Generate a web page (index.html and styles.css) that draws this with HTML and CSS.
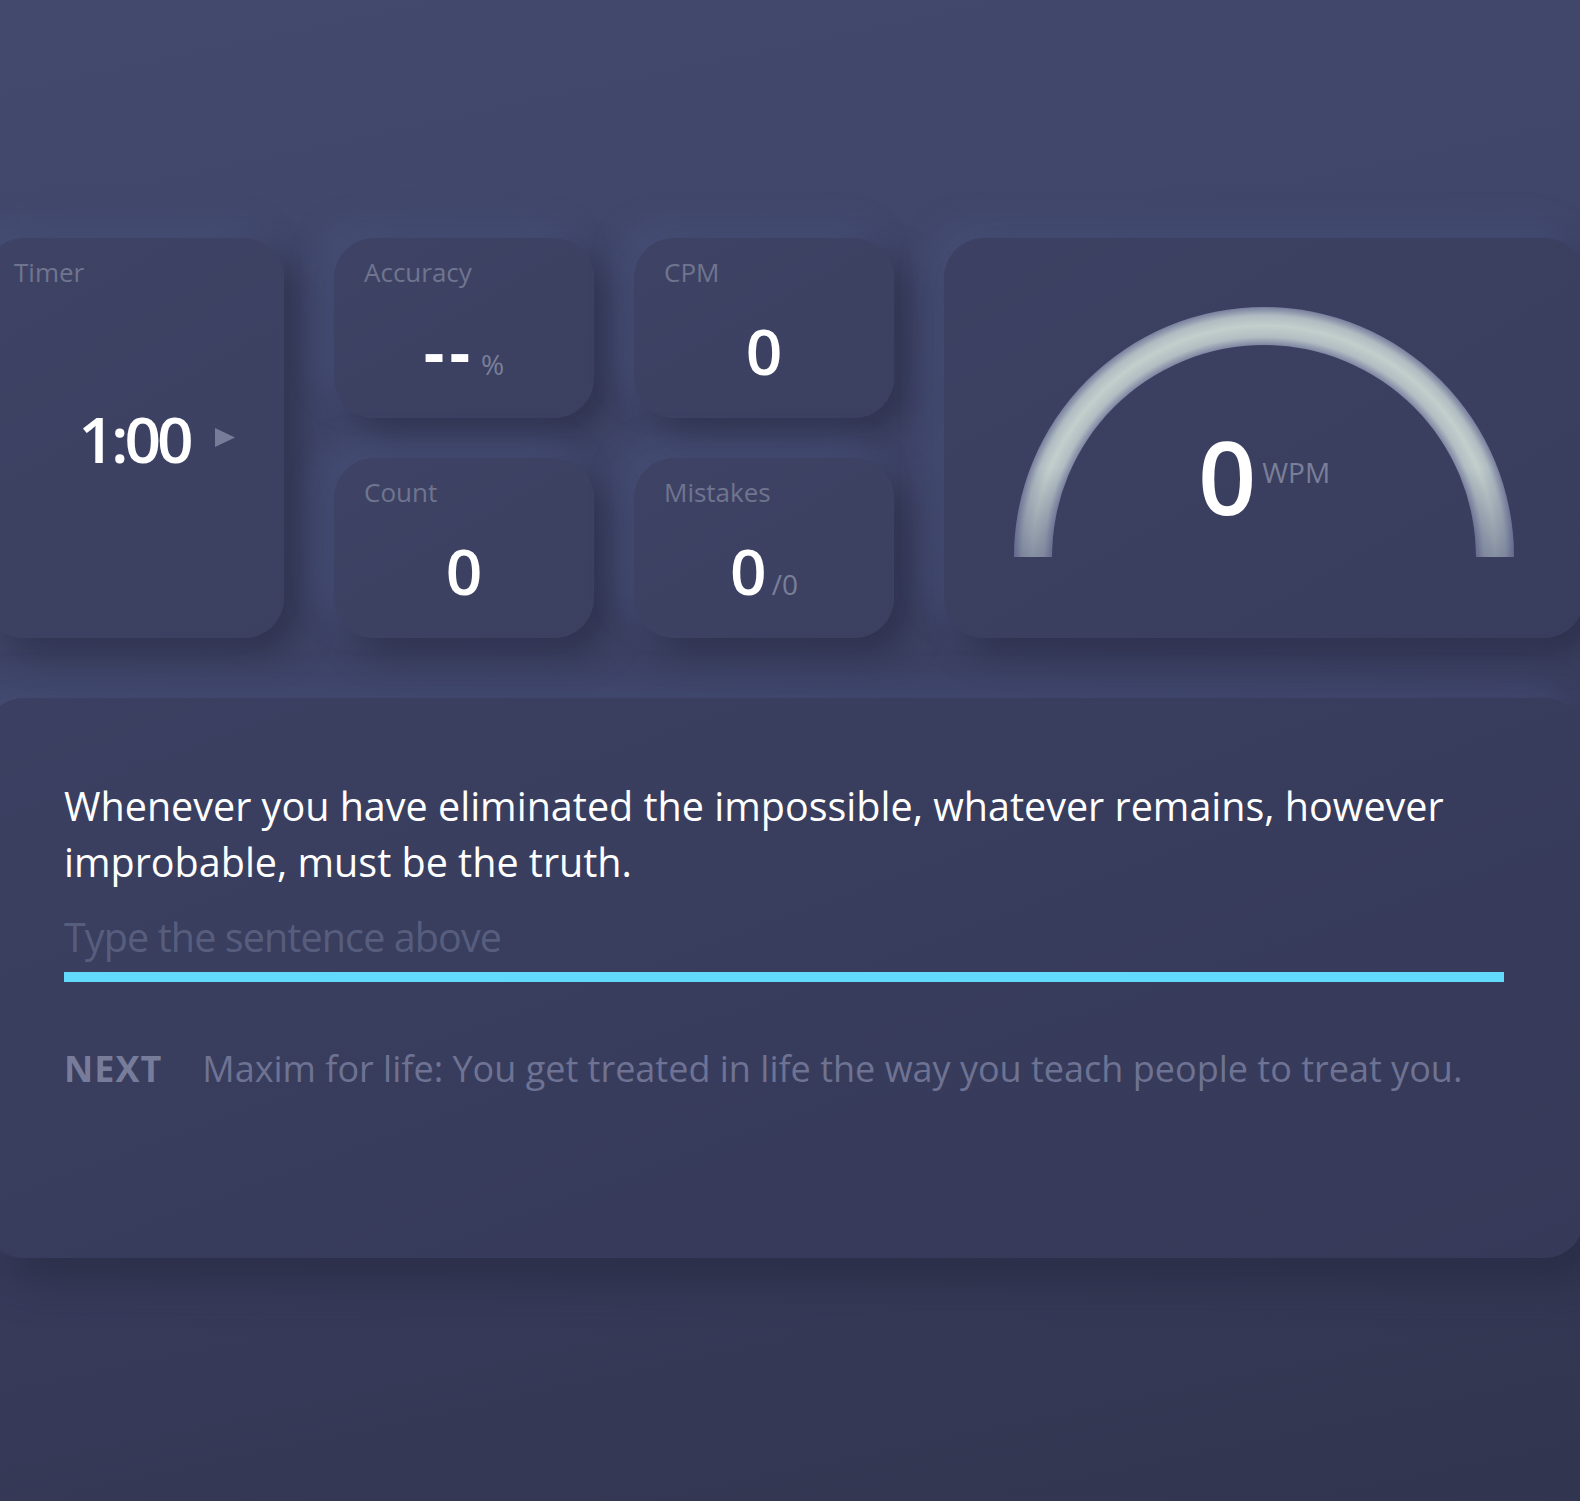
FILE: index.html
```html
<!DOCTYPE html>
<html lang="en">
<head>
<meta charset="utf-8">
<title>Typing Speed Test</title>
<link rel="stylesheet" href="styles.css">
</head>
<body>
<div class="page">
  <section class="stats">
    <div class="card timer">
      <div class="label">Timer</div>
      <div class="timer-value">
        <span class="time">1:00<svg class="play" width="20" height="19" viewBox="0 0 20 19"><polygon points="0,0 20,9.5 0,19" fill="#777c98"/></svg></span>
      </div>
    </div>
    <div class="grid">
      <div class="card small">
        <div class="label">Accuracy</div>
        <div class="value"><span class="num dashes">--</span><span class="unit pct">%</span></div>
      </div>
      <div class="card small">
        <div class="label">CPM</div>
        <div class="value"><span class="num">0</span></div>
      </div>
      <div class="card small">
        <div class="label">Count</div>
        <div class="value"><span class="num">0</span></div>
      </div>
      <div class="card small">
        <div class="label">Mistakes</div>
        <div class="value"><span class="num">0</span><span class="unit slash">/0</span></div>
      </div>
    </div>
    <div class="card wpm">
      <div class="gauge">
        <svg class="arc" width="500" height="250" viewBox="0 0 500 250">
          <defs>
            <radialGradient id="ring" gradientUnits="userSpaceOnUse" cx="250" cy="250" r="250">
              <stop offset="0.848" stop-color="#7f86a3"/>
              <stop offset="0.88" stop-color="#b1bdc2"/>
              <stop offset="0.925" stop-color="#c3cfcc"/>
              <stop offset="0.966" stop-color="#afbbc1"/>
              <stop offset="1" stop-color="#787f9e"/>
            </radialGradient>
            <linearGradient id="fade" gradientUnits="userSpaceOnUse" x1="0" y1="160" x2="0" y2="250">
              <stop offset="0" stop-color="#4a5078" stop-opacity="0"/>
              <stop offset="1" stop-color="#4a5078" stop-opacity="0.5"/>
            </linearGradient>
          </defs>
          <path d="M0,250 A250,250 0 0 1 500,250 L462,250 A212,212 0 0 0 38,250 Z" fill="url(#ring)"/>
          <path d="M0,250 A250,250 0 0 1 500,250 L462,250 A212,212 0 0 0 38,250 Z" fill="url(#fade)"/>
        </svg>
        <div class="readout"><span class="big">0</span><span class="unit wpm-unit">WPM</span></div>
      </div>
    </div>
  </section>
  <section class="card typing">
    <p class="sentence">Whenever you have eliminated the impossible, whatever remains, however improbable, must be the truth.</p>
    <input class="entry" type="text" placeholder="Type the sentence above" autofocus>
    <p class="next"><span class="next-tag">NEXT</span><span class="next-text">Maxim for life: You get treated in life the way you teach people to treat you.</span></p>
  </section>
</div>
</body>
</html>
```

FILE: styles.css
```css
html, body {
  margin: 0;
  padding: 0;
}

body {
  min-height: 1501px;
  overflow: hidden;
  font-family: "Open Sans", "Noto Sans", "Liberation Sans", sans-serif;
  color: #ffffff;
  background: linear-gradient(168deg, #42496c 0%, #3f4568 35%, #383c5c 65%, #32354f 100%);
}

.page {
  width: 1600px;
  margin-left: -16px;
  padding-top: 238px;
}

.stats {
  display: flex;
  gap: 50px;
  height: 400px;
}

.card {
  box-sizing: border-box;
  border-radius: 40px;
  background: linear-gradient(150deg, #3e4365 0%, #3b4061 100%);
  box-shadow: 16px 16px 32px rgba(36, 38, 62, 0.55), -14px -14px 30px rgba(78, 88, 132, 0.45);
}

.label {
  font-size: 26px;
  line-height: 1.2;
  color: #70758f;
}

.timer {
  width: 300px;
  height: 400px;
  padding: 19px 30px;
  display: grid;
}

.timer .label {
  grid-area: 1 / 1;
  align-self: start;
}

.timer-value {
  grid-area: 1 / 1;
  align-self: center;
  justify-self: center;
  margin-top: 2px;
}

.time {
  position: relative;
  display: block;
  font-size: 64px;
  font-weight: 600;
  letter-spacing: -4px;
  line-height: 1;
}

.play {
  position: absolute;
  left: calc(100% + 25px);
  top: 21px;
}

.grid {
  width: 560px;
  display: grid;
  grid-template-columns: 260px 260px;
  grid-template-rows: 180px 180px;
  gap: 40px;
}

.small {
  padding: 19px 30px;
}

.value {
  margin-top: 31px;
  display: flex;
  justify-content: center;
  align-items: baseline;
}

.num {
  font-size: 64px;
  font-weight: 600;
  line-height: 1;
}

.dashes {
  font-weight: 700;
  letter-spacing: 5px;
}

.unit {
  font-size: 28px;
  font-weight: 400;
  line-height: 1;
  color: #7a7f99;
}

.pct {
  margin-left: 6px;
}

.slash {
  margin-left: 5px;
}

.wpm {
  width: 640px;
  height: 400px;
  padding-top: 69px;
  display: flex;
  justify-content: center;
  align-items: flex-start;
  background: linear-gradient(150deg, #3c4163 0%, #393d5d 100%);
}

.gauge {
  position: relative;
  width: 500px;
  height: 250px;
}

.arc {
  display: block;
}

.readout {
  position: absolute;
  top: 118px;
  left: 0;
  right: 0;
  display: flex;
  justify-content: center;
  align-items: flex-start;
}

.big {
  font-size: 102px;
  font-weight: 600;
  line-height: 1;
}

.wpm-unit {
  margin-top: 33px;
  margin-left: 6px;
}

.typing {
  margin-top: 60px;
  height: 560px;
  padding: 80px 80px;
  background: linear-gradient(160deg, #3b4062 0%, #383c5c 55%, #363958 100%);
  box-shadow: 18px 22px 40px rgba(36, 38, 62, 0.6), -14px -14px 30px rgba(78, 88, 132, 0.45);
}

.sentence {
  margin: 0;
  font-size: 39.5px;
  line-height: 56px;
  color: #ffffff;
}

.entry {
  display: block;
  box-sizing: border-box;
  width: 100%;
  height: 76px;
  margin: 16px 0 0;
  padding: 0 0 5px;
  border: 0;
  border-bottom: 10px solid #61dafb;
  border-radius: 0;
  outline: none;
  background: transparent;
  font-family: inherit;
  font-size: 39.5px;
  letter-spacing: -0.9px;
  color: #ffffff;
  caret-color: #d8deea;
}

.entry::placeholder {
  color: #575d7d;
}

.next {
  margin: 62px 0 0;
  font-size: 36px;
  line-height: 1.4;
  display: flex;
  gap: 40px;
  white-space: nowrap;
}

.next-tag {
  font-weight: 700;
  letter-spacing: 1px;
  color: #777c9a;
}

.next-text {
  color: #6e7393;
}
```
